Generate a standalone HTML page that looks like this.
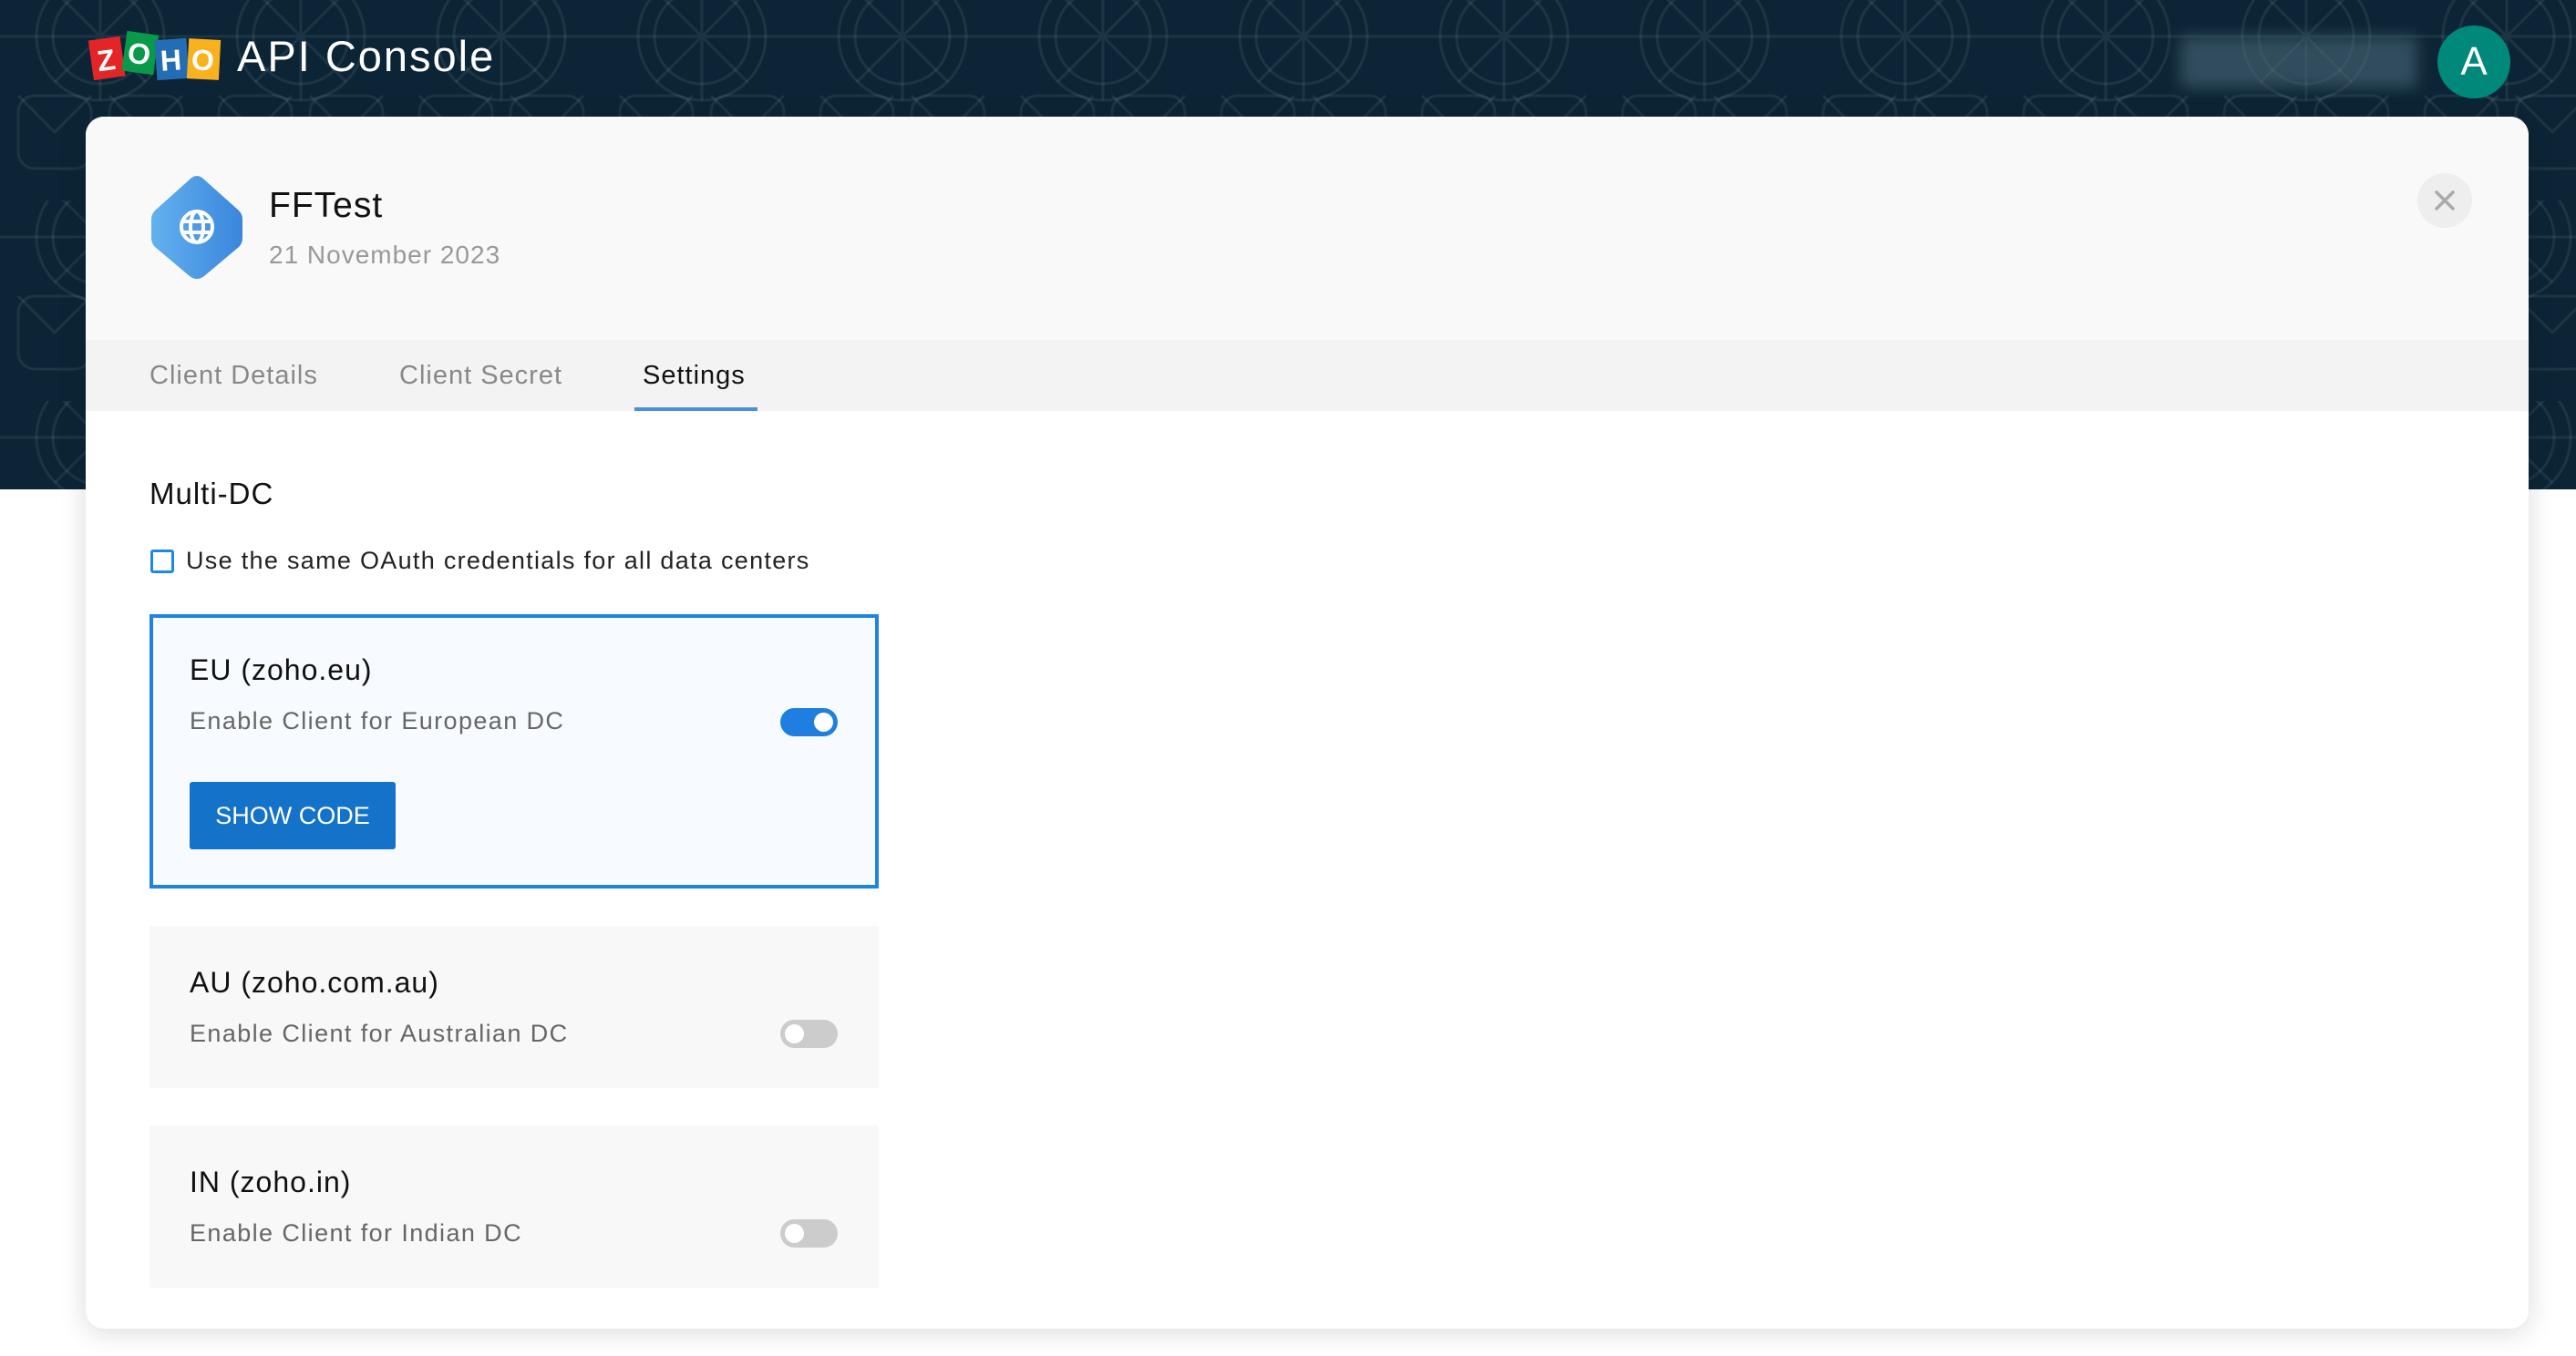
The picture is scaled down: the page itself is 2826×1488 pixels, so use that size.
<!DOCTYPE html>
<html><head><meta charset="utf-8"><style>
*{margin:0;padding:0;box-sizing:border-box}
body{width:2826px;height:1488px;background:#fff;font-family:"Liberation Sans",sans-serif;position:relative;overflow:hidden;letter-spacing:1px}
.hdr{position:absolute;left:0;top:0;width:2826px;height:537px;background:#0c2536;overflow:hidden}
.a{position:absolute;white-space:nowrap}
.card{position:absolute;left:94px;top:128px;width:2680px;height:1330px;background:#fff;border-radius:20px;box-shadow:0 4px 30px rgba(0,0,0,.15);overflow:hidden}
.tog{position:absolute;width:63px;height:31px;border-radius:16px}
.tog i{position:absolute;top:5px;width:21px;height:21px;border-radius:50%;background:#fff}
</style></head><body>
<div class="hdr">
<svg width="2826" height="537" style="position:absolute;left:0;top:0">
<defs><pattern id="p" width="220" height="220" patternUnits="userSpaceOnUse">
<g fill="none" stroke="rgba(255,255,255,0.07)" stroke-width="3">
<circle cx="110" cy="40" r="70"/><circle cx="110" cy="40" r="52"/>
<path d="M60 -10 L160 90 M160 -10 L60 90 M110 -30 V110 M0 40 H220"/>
<rect x="20" y="105" width="80" height="80" rx="18"/><rect x="120" y="105" width="80" height="80" rx="18"/>
<path d="M20 105 L60 145 L100 105 M120 105 L160 145 L200 105"/>
</g></pattern></defs>
<rect width="2826" height="537" fill="url(#p)"/></svg>
</div>
<svg class="a" style="left:95px;top:28px" width="150" height="66" viewBox="0 0 150 66">
<g transform="rotate(-8 22 38)"><rect x="5" y="14" width="35" height="44" fill="#e42527"/><text x="22" y="49" font-family="Liberation Sans" font-weight="bold" font-size="32" fill="#fff" text-anchor="middle">Z</text></g>
<g transform="rotate(8 58 32)"><rect x="41" y="8" width="35" height="44" fill="#089949"/><text x="58" y="42" font-family="Liberation Sans" font-weight="bold" font-size="32" fill="#fff" text-anchor="middle">O</text></g>
<g transform="rotate(-4 93 38)"><rect x="76" y="15" width="35" height="44" fill="#226db4"/><text x="93" y="49" font-family="Liberation Sans" font-weight="bold" font-size="32" fill="#fff" text-anchor="middle">H</text></g>
<g transform="rotate(3 128 38)"><rect x="111" y="15" width="35" height="44" fill="#f9b21d"/><text x="128" y="49" font-family="Liberation Sans" font-weight="bold" font-size="32" fill="#fff" text-anchor="middle">O</text></g>
</svg>
<div class="a" style="left:260px;top:34px;font-size:47px;color:#fff;letter-spacing:2px">API Console</div>
<div class="a" style="left:2392px;top:40px;width:260px;height:56px;background:rgba(80,110,125,.55);filter:blur(8px)"></div>
<div class="a" style="left:2674px;top:28px;width:80px;height:80px;border-radius:50%;background:#00897b;color:#fff;font-size:44px;text-align:center;line-height:80px;letter-spacing:0">A</div>

<div class="card">
<div class="a" style="left:0;top:0;width:2680px;height:245px;background:#f9f9f9"></div>
<div class="a" style="left:0;top:245px;width:2680px;height:78px;background:#f3f3f3"></div>
<svg class="a" style="left:70px;top:63px" width="104" height="116" viewBox="0 0 104 116">
<defs><linearGradient id="g" x1="0" x2="1"><stop offset="0" stop-color="#63b1ee"/><stop offset="1" stop-color="#3a86dd"/></linearGradient></defs>
<path d="M52 2 Q56 2 60 6 L98 40 Q102 44 102 50 L102 70 Q102 76 98 80 L60 112 Q52 118 44 112 L6 80 Q2 76 2 70 L2 50 Q2 44 6 40 L44 6 Q48 2 52 2Z" fill="url(#g)"/>
<g fill="none" stroke="#fff" stroke-width="4"><circle cx="52" cy="58" r="17"/><ellipse cx="52" cy="58" rx="7" ry="17"/><path d="M36 52 H68 M36 64 H68"/></g>
</svg>
<div class="a" style="left:201px;top:76px;font-size:39px;color:#111">FFTest</div>
<div class="a" style="left:201px;top:136px;font-size:28px;color:#999">21 November 2023</div>
<div class="a" style="left:2558px;top:62px;width:60px;height:60px;border-radius:50%;background:#eee"></div>
<svg class="a" style="left:2576px;top:80px" width="24" height="24"><path d="M3 3L21 21M21 3L3 21" stroke="#aaa" stroke-width="3.5" stroke-linecap="round"/></svg>
<div class="a" style="left:70px;top:268px;font-size:29px;color:#888">Client Details</div>
<div class="a" style="left:344px;top:268px;font-size:29px;color:#888">Client Secret</div>
<div class="a" style="left:611px;top:268px;font-size:29px;color:#111">Settings</div>
<div class="a" style="left:602px;top:319px;width:135px;height:4px;background:#4a8fe0"></div>

<div class="a" style="left:70px;top:395px;font-size:33px;color:#111">Multi-DC</div>
<div class="a" style="left:71px;top:475px;width:26px;height:26px;border:3px solid #1e88e5;border-radius:3px"></div>
<div class="a" style="left:110px;top:472px;font-size:27px;color:#222;letter-spacing:1.3px">Use the same OAuth credentials for all data centers</div>

<div class="a" style="left:70px;top:546px;width:800px;height:301px;border:4px solid #1e84e0;background:#f7fbff"></div>
<div class="a" style="left:114px;top:589px;font-size:32px;color:#111">EU (zoho.eu)</div>
<div class="a" style="left:114px;top:648px;font-size:27px;color:#666;letter-spacing:1.4px">Enable Client for European DC</div>
<div class="tog" style="left:762px;top:649px;background:#1e7fe0"><i style="right:5px"></i></div>
<div class="a" style="left:114px;top:730px;width:226px;height:74px;background:#1473c9;border-radius:3px;color:#fff;font-size:27px;text-align:center;line-height:74px;letter-spacing:0">SHOW CODE</div>

<div class="a" style="left:70px;top:888px;width:800px;height:178px;background:#f8f8f8"></div>
<div class="a" style="left:114px;top:932px;font-size:32px;color:#111">AU (zoho.com.au)</div>
<div class="a" style="left:114px;top:991px;font-size:27px;color:#666;letter-spacing:1.4px">Enable Client for Australian DC</div>
<div class="tog" style="left:762px;top:991px;background:#ccc"><i style="left:5px"></i></div>

<div class="a" style="left:70px;top:1107px;width:800px;height:178px;background:#f8f8f8"></div>
<div class="a" style="left:114px;top:1151px;font-size:32px;color:#111">IN (zoho.in)</div>
<div class="a" style="left:114px;top:1210px;font-size:27px;color:#666;letter-spacing:1.4px">Enable Client for Indian DC</div>
<div class="tog" style="left:762px;top:1210px;background:#ccc"><i style="left:5px"></i></div>
</div>
</body></html>
